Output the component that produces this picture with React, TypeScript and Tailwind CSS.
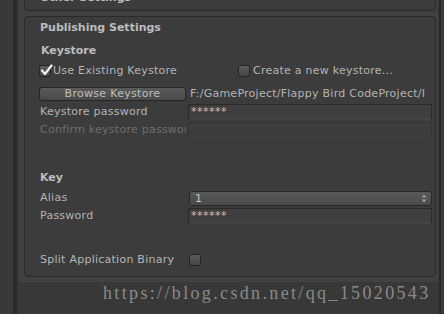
import React from "react";

const font = { fontFamily: '"DejaVu Sans", "Liberation Sans", sans-serif' };

function Check({ checked }: { checked?: boolean }) {
  return (
    <div className="relative w-[12px] h-[12px] rounded-[2px] border border-[#262626] bg-gradient-to-b from-[#5c5c5c] to-[#454545] shrink-0">
      {checked && (
        <svg className="absolute left-[0px] top-[-2px]" width="13" height="13" viewBox="0 0 13 13">
          <path d="M2 6.5 L5 10 L11.5 1.5" fill="none" stroke="#f2f2f2" strokeWidth="2.2" strokeLinecap="round" strokeLinejoin="round" />
        </svg>
      )}
    </div>
  );
}

export default function App() {
  return (
    <div className="w-[444px] h-[314px] overflow-hidden flex bg-[#383838] text-[11px] leading-[16px] text-[#b4b4b4] relative" style={font}>
      <div className="w-[13px] bg-[#393939]" />
      <div className="w-[4px] bg-[#2a2a2a]" />
      <div className="w-[422px] flex flex-col bg-[#383838]">
        <div className="ml-[2px] w-[419px] bg-[#414141] pl-[5px] pr-[2px] pb-[5px] flex flex-col">
          {/* Other settings panel (cut off) */}
          <div className="h-[11px] border-x border-b border-[#2a2a2a] rounded-b-[4px] bg-[#3c3c3c] overflow-hidden pl-[15px]">
            <div className="-mt-[10px] font-bold text-[#bdbdbd]">Other Settings</div>
          </div>
          {/* Publishing settings panel */}
          <div className="mt-[5px] border border-[#2a2a2a] rounded-[4px] bg-[#3c3c3c] pl-[15px] pr-[3px] pt-[3px] pb-[8px] flex flex-col">
            <div className="h-[16px] font-bold text-[#bdbdbd]">Publishing Settings</div>
            <div className="mt-[7px] h-[16px] font-bold text-[#bdbdbd] pl-[1px]">Keystore</div>
            <div className="mt-[4px] h-[16px] flex items-center -ml-[1px]">
              <div className="w-[199px] flex items-center">
                <Check checked />
                <span className="ml-[2px] tracking-[0.25px]">Use Existing Keystore</span>
              </div>
              <Check />
              <span className="ml-[3px] tracking-[0.25px]">Create a new keystore...</span>
            </div>
            <div className="mt-[7px] h-[16px] flex items-center -ml-[1px]">
              <div className="w-[147px] h-[14px] rounded-[3px] border border-[#262626] bg-gradient-to-b from-[#5a5a5a] to-[#4a4a4a] flex items-center justify-center text-[#bdbdbd] leading-[12px] tracking-[0.3px]">
                Browse Keystore
              </div>
              <span className="ml-[4px] whitespace-nowrap overflow-hidden w-[242px] tracking-[0.25px]">F:/GameProject/Flappy Bird CodeProject/I</span>
            </div>
            <div className="mt-[2px] h-[16px] flex">
              <div className="w-[148px] overflow-hidden whitespace-nowrap tracking-[0.25px]">Keystore password</div>
              <div className="flex-1 h-[16px] border border-[#2a2a2a] border-b-[#454545] bg-[#3f3f3f] pl-[2px] text-[#c4c4c4] leading-[14px] tracking-[0.5px]">******</div>
            </div>
            <div className="mt-[2px] h-[16px] flex">
              <div className="w-[148px] pr-[2px]">
                <div className="overflow-hidden whitespace-nowrap text-[#6c6c6c] tracking-[0.25px]">Confirm keystore password</div>
              </div>
              <div className="flex-1 h-[16px] border border-[#333333] border-b-[#424242] bg-[#3d3d3d]" />
            </div>
            <div className="mt-[32px] h-[16px] font-bold text-[#bdbdbd]">Key</div>
            <div className="mt-[4px] h-[16px] flex items-center">
              <div className="w-[149px] tracking-[0.25px]">Alias</div>
              <div className="flex-1 h-[15px] rounded-[3px] border border-[#262626] bg-gradient-to-b from-[#585858] to-[#4a4a4a] flex items-center pl-[5px] pr-[4px] text-[#c8c8c8] leading-[13px]">
                <span className="flex-1">1</span>
                <svg width="6" height="9" viewBox="0 0 6 9">
                  <path d="M3 0.5 L5.5 3.5 L0.5 3.5 Z" fill="#9a9a9a" />
                  <path d="M3 8.5 L5.5 5.5 L0.5 5.5 Z" fill="#9a9a9a" />
                </svg>
              </div>
            </div>
            <div className="mt-[2px] h-[16px] flex">
              <div className="w-[148px] tracking-[0.25px]">Password</div>
              <div className="flex-1 h-[16px] border border-[#2a2a2a] border-b-[#454545] bg-[#3f3f3f] pl-[2px] text-[#c4c4c4] leading-[14px] tracking-[0.5px]">******</div>
            </div>
            <div className="mt-[28px] h-[16px] flex items-center">
              <div className="w-[149px] tracking-[0.25px]">Split Application Binary</div>
              <Check />
            </div>
          </div>
        </div>
      </div>
      <div className="w-[2px] bg-[#2a2a2a]" />
      <div className="flex-1 bg-[#3a3a3a]" />
      <div
        className="absolute left-[103px] top-[281px] text-[18px] leading-[24px] text-[#8a8a8a] tracking-[2.35px] whitespace-nowrap"
        style={{ fontFamily: '"Liberation Serif", serif' }}
      >
        https://blog.csdn.net/qq_15020543
      </div>
    </div>
  );
}
